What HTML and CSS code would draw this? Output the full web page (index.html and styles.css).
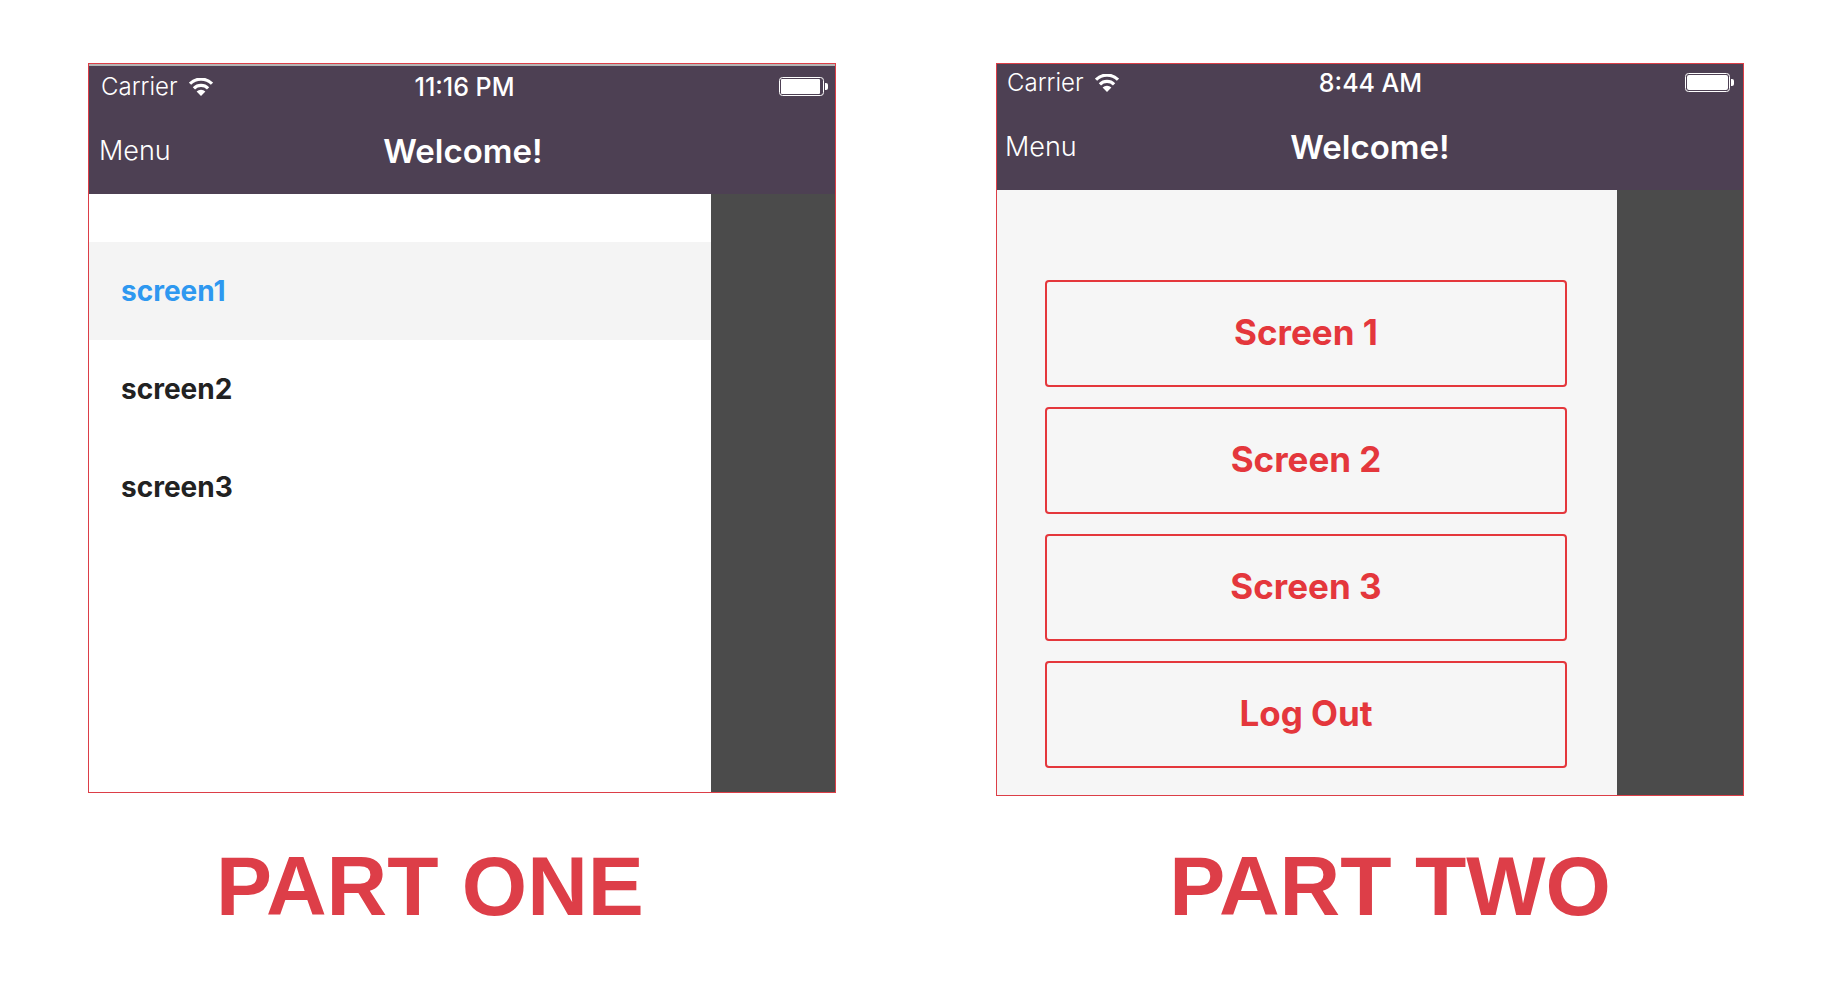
FILE: index.html
```
<!DOCTYPE html>
<html lang="en">
<head>
    <meta charset="UTF-8">
    <meta name="viewport" content="width=device-width, initial-scale=1.0">
    <title>Drawer navigation</title>
    <link rel="stylesheet" href="styles.css">
</head>
<body>
<main class="parts">
    <figure class="part part-one">
        <div class="phone">
            <header class="header">
                <div class="status-bar">
                    <div class="carrier">
                        <span>Carrier</span>
                        <svg class="wifi" viewBox="0 0 24 18" width="24" height="18" aria-hidden="true">
                            <path d="M1 5.7a15.5 15.5 0 0 1 22 0M4.9 10.4a10 10 0 0 1 14.2 0" fill="none" stroke="#fff" stroke-width="3.2"/>
                            <path d="M12 18 7.6 13.6a6.2 6.2 0 0 1 8.8 0z" fill="#fff"/>
                        </svg>
                    </div>
                    <time class="time">11:16 PM</time>
                    <svg class="battery" viewBox="0 0 49 19" width="49" height="19" aria-hidden="true">
                        <rect x="0.5" y="0.5" width="44" height="18" rx="3" fill="none" stroke="#fff"/>
                        <rect x="2" y="2" width="39" height="15" rx="1" fill="#fff"/>
                        <path d="M46 6h1a2 2 0 0 1 2 2v3a2 2 0 0 1-2 2h-1z" fill="#fff"/>
                    </svg>
                </div>
                <div class="nav-bar">
                    <button class="menu-button" type="button">Menu</button>
                    <h1 class="title">Welcome!</h1>
                </div>
            </header>
            <div class="screen">
                <nav class="drawer drawer-list">
                    <a class="drawer-item active" href="#screen1">screen1</a>
                    <a class="drawer-item" href="#screen2">screen2</a>
                    <a class="drawer-item" href="#screen3">screen3</a>
                </nav>
                <div class="overlay"></div>
            </div>
        </div>
        <figcaption class="caption">PART ONE</figcaption>
    </figure>

    <figure class="part part-two">
        <div class="phone">
            <header class="header">
                <div class="status-bar">
                    <div class="carrier">
                        <span>Carrier</span>
                        <svg class="wifi" viewBox="0 0 24 18" width="24" height="18" aria-hidden="true">
                            <path d="M1 5.7a15.5 15.5 0 0 1 22 0M4.9 10.4a10 10 0 0 1 14.2 0" fill="none" stroke="#fff" stroke-width="3.2"/>
                            <path d="M12 18 7.6 13.6a6.2 6.2 0 0 1 8.8 0z" fill="#fff"/>
                        </svg>
                    </div>
                    <time class="time">8:44 AM</time>
                    <svg class="battery" viewBox="0 0 49 19" width="49" height="19" aria-hidden="true">
                        <rect x="0.5" y="0.5" width="44" height="18" rx="3" fill="none" stroke="#fff"/>
                        <rect x="2" y="2" width="41" height="15" rx="2" fill="#fff"/>
                        <path d="M46 6h1a2 2 0 0 1 2 2v3a2 2 0 0 1-2 2h-1z" fill="#fff"/>
                    </svg>
                </div>
                <div class="nav-bar">
                    <button class="menu-button" type="button">Menu</button>
                    <h1 class="title">Welcome!</h1>
                </div>
            </header>
            <div class="screen">
                <nav class="drawer drawer-buttons">
                    <button class="drawer-button" type="button">Screen 1</button>
                    <button class="drawer-button" type="button">Screen 2</button>
                    <button class="drawer-button" type="button">Screen 3</button>
                    <button class="drawer-button" type="button">Log Out</button>
                </nav>
                <div class="overlay"></div>
            </div>
        </div>
        <figcaption class="caption">PART TWO</figcaption>
    </figure>
</main>
</body>
</html>
```
FILE: styles.css
```
* {
    box-sizing: border-box;
}

body {
    margin: 0;
    background-color: #fff;
    font-family: 'Inter', 'Helvetica', 'Arial', sans-serif;
}

.parts {
    display: grid;
    grid-template-columns: 1fr 1fr;
    gap: 160px;
    padding: 63px 92px 48px 88px;
}

.part {
    display: flex;
    flex-direction: column;
    justify-content: space-between;
    margin: 0;
}

.phone {
    border: 1px solid #dc3e47;
}

.header {
    background-color: #4d4053;
    color: #fff;
}

.part-one .header {
    border-top: 2px solid #b4b4b4;
    padding: 2px 0 0 2px;
}

.status-bar {
    display: grid;
    grid-template-columns: 1fr auto 1fr;
    align-items: center;
    height: 37px;
    padding: 0 9px 0 10px;
    font-size: 24px;
}

.part-one .status-bar {
    padding-right: 7px;
}

.carrier {
    display: flex;
    align-items: center;
    gap: 11px;
    font-weight: 300;
}

.time {
    font-size: 25px;
    font-weight: 500;
}

.battery {
    justify-self: end;
}

.nav-bar {
    display: grid;
    grid-template-columns: 1fr auto 1fr;
    align-items: center;
    height: 89px;
    padding: 2px 8px 0;
}

.menu-button {
    justify-self: start;
    padding: 0;
    border: none;
    background: none;
    color: #fff;
    font-family: inherit;
    font-size: 27px;
    font-weight: 300;
    cursor: pointer;
}

.title {
    margin: 0;
    font-size: 33px;
    font-weight: 600;
}

.screen {
    display: grid;
    grid-template-columns: 5fr 1fr;
}

.part-two .screen {
    grid-template-columns: 1fr 126px;
}

.overlay {
    background-color: #4b4b4b;
}

.drawer {
    display: flex;
    flex-direction: column;
}

.drawer-list {
    min-height: 598px;
    padding-top: 48px;
}

.drawer-item {
    padding: 32px;
    color: #222;
    font-size: 28px;
    font-weight: 700;
    line-height: 34px;
    text-decoration: none;
}

.drawer-item.active {
    background-color: #f4f4f4;
    color: #2e98f0;
}

.drawer-buttons {
    gap: 20px;
    padding: 90px 50px 27px 48px;
    background-color: #f6f6f6;
}

.drawer-button {
    height: 107px;
    padding: 0 0 4px;
    border: 2px solid #e4373c;
    border-radius: 4px;
    background-color: transparent;
    color: #e4373c;
    font-family: inherit;
    font-size: 35px;
    font-weight: 700;
    cursor: pointer;
}

.caption {
    color: #dd3e48;
    font-family: 'Liberation Sans', 'Arial', sans-serif;
    font-size: 84px;
    font-weight: 700;
    line-height: 96px;
    text-align: center;
}

.part-one .caption {
    padding-right: 64px;
}

.part-two .caption {
    padding: 42px 0 0 40px;
}
```
